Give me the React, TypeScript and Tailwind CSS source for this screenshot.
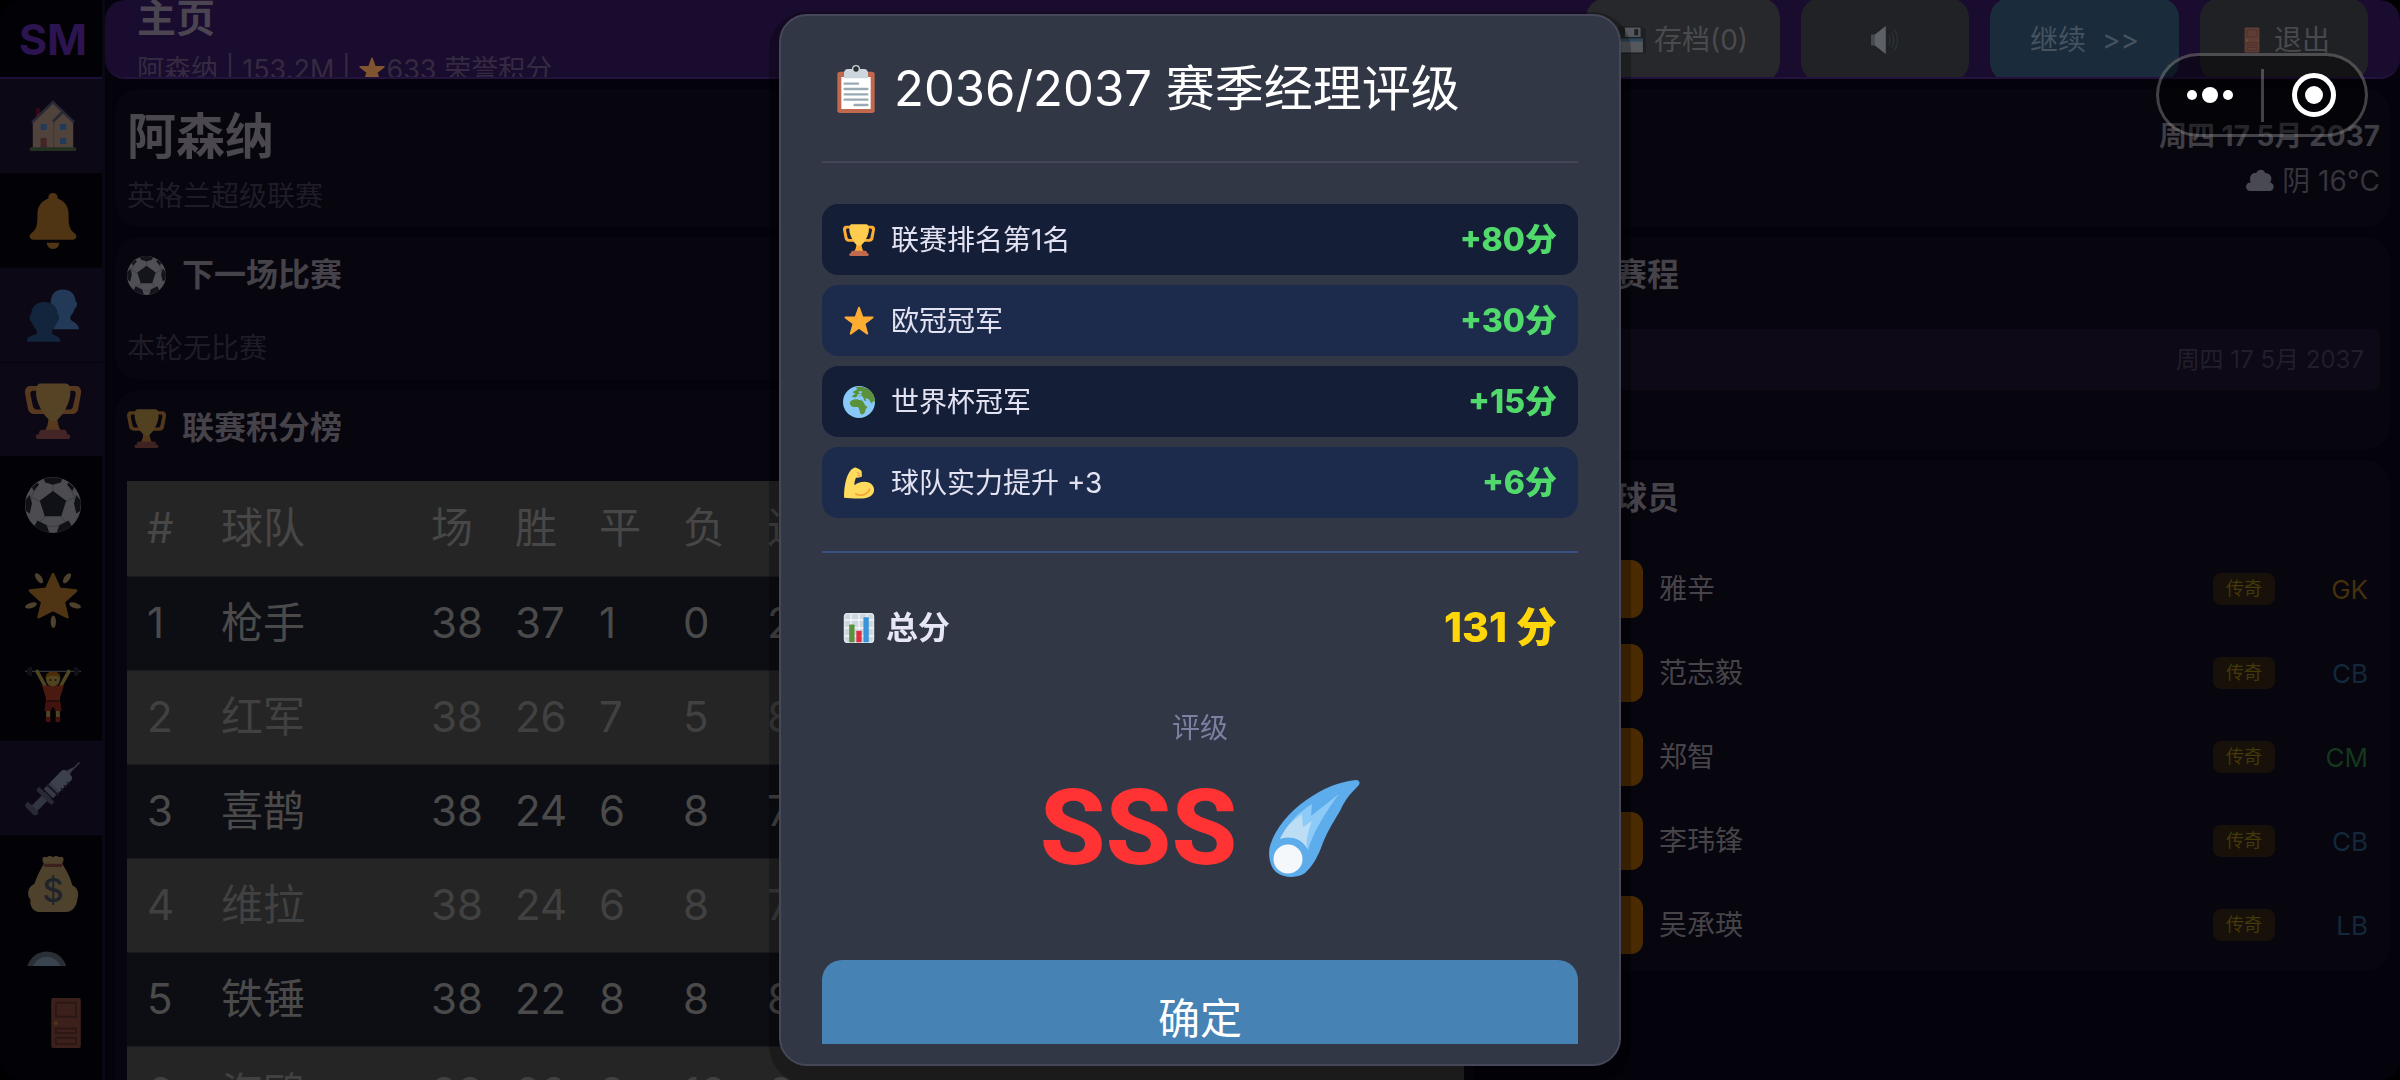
import type { ReactNode } from "react";

type IconProps = { className: string };

function Glyph({ className, children, box = "0 0 36 36" }: { className: string; children: ReactNode; box?: string }) {
  return (
    <svg viewBox={box} className={`shrink-0 ${className}`} aria-hidden="true">
      {children}
    </svg>
  );
}

const Trophy = ({ className }: IconProps) => (
  <Glyph className={className}>
    <path fill="#FFAC33" d="M5.123 5h6C12.227 5 13 4.896 13 6V4c0-1.104-.773-2-1.877-2h-8c-2 0-3.583 2.125-3 5 0 0 1.791 9.375 1.917 9.958C2.373 18.5 4.164 20 6.081 20h6.958c1.105 0-.039-1.896-.039-3v-2c0 1.104-.773 2-1.877 2h-4c-1.104 0-1.833-1.042-2-2S3.539 7.667 3.539 7.667C3.206 5.75 4.018 5 5.123 5zm25.812 0h-6C23.831 5 22 4.896 22 6V4c0-1.104 1.831-2 2.935-2h8c2 0 3.584 2.125 3 5 0 0-1.633 9.419-1.771 10-.354 1.5-2.042 3-4 3h-7.146C21.914 20 22 18.104 22 17v-2c0 1.104 1.831 2 2.935 2h4c1.104 0 1.834-1.042 2-2s1.584-7.333 1.584-7.333C32.851 5.75 32.04 5 30.935 5z" />
    <path fill="#FFAC33" d="M20.8 22c0-6.9-2.7 0-2.7 0s-3-6.9-3 0-3.3 10-3.3 10h12.3s-3.3-3-3.3-10z" />
    <path fill="#FFCC4D" d="M29.123 6.577c0 6.775-6.77 18.192-11 18.192-4.231 0-11-11.417-11-18.192 0-5.195 1-6.319 3-6.319h15c2.917 0 4 .684 4 6.319z" />
    <path fill="#C1694F" d="M27 33c0 1.1.2 2-.9 2h-16C9 35 9 34.100 9 33v-1c0-1.100 1.200-2 2.200-2h13.900c1 0 1.900.900 1.900 2v1z" />
    <rect x="7" y="33" width="22" height="3" rx="1.3" fill="#C1694F" />
  </Glyph>
);

const Star = ({ className }: IconProps) => (
  <Glyph className={className}>
    <polygon
      points="18,3 21.8,13.6 33.3,14 24.2,20.9 27.400,32.300 18,25.500 8.600,32.300 11.800,20.900 2.700,14 14.200,13.600"
      fill="#FFAC33"
      stroke="#FFAC33"
      strokeWidth="2"
      strokeLinejoin="round"
    />
  </Glyph>
);

const House = ({ className }: IconProps) => (
  <Glyph className={className}>
    <path fill="#A0041E" d="M7 6h2.600v6H7z" />
    <path fill="#E8CC95" d="M5 14L18 2l13 12v18H5z" />
    <path fill="#C9AC76" d="M18 14h1v18h-1z" />
    <path d="M4.500 15L18 2l13.500 13M18 14.500l6-6" fill="none" stroke="#66757F" strokeWidth="1.700" />
    <path fill="#55ACEE" d="M10 16h4v4h-4zM22.500 16h4v4h-4zM22.500 25h4v4h-4z" />
    <path fill="#C1694F" d="M10 25h4v7h-4z" />
    <rect x="3" y="31" width="30" height="2.500" rx="1.200" fill="#5C913B" />
  </Glyph>
);

const Bell = ({ className }: IconProps) => (
  <Glyph className={className}>
    <path fill="#FFAC33" d="M28 13c0 9 .5 10 4.500 13.500 1 1 .5 3.500-1.500 3.500H5c-2 0-2.500-2.500-1.500-3.500C7.500 23 8 22 8 13 8 7.500 12.500 3 18 3s10 4.500 10 10z" />
    <circle cx="18" cy="3" r="3" fill="#FFAC33" />
    <path fill="#FFAC33" d="M14 32h8c0 2.200-1.800 4-4 4s-4-1.800-4-4z" />
  </Glyph>
);

const People = ({ className }: IconProps) => (
  <Glyph className={className}>
    <path fill="#55ACEE" d="M24.500 1c5 0 8 3.500 8 7.500 1.500.5 1.200 4-.5 4.500-.4 2-1.500 3.800-2.800 5v2c0 1.500 5.500 2.500 5.500 6.500H17l3-8c-2-1-3.500-5-3.500-8.500C16.500 4.500 19 1 24.500 1z" />
    <path fill="#226699" d="M12.500 9c5.500 0 8.500 3.500 8.500 8 1.500.5 1.200 4.500-.5 5-.5 2-1.600 3.800-3 5v2.500c2 1 5.300 1.800 5.300 5.000H1.200C1.200 30.500 5 30.500 7.500 29.500V27c-1.400-1.200-2.500-3-3-5-1.700-.5-2-4.500-.5-5 0-4.500 3-8 8.500-8z" />
  </Glyph>
);

const Ball = ({ className }: IconProps) => (
  <Glyph className={className}>
    <circle cx="18" cy="18" r="18" fill="#F5F8FA" />
    <g fill="none" stroke="#CCD6DD" strokeWidth="1">
      <path d="M18 4v6M10 16l-6-3M26 16l6-3M13 25l-4 5M23 25l4 5M9 30l9 2 9-2M4 13l3-6M32 13l-3-6M4 13l-1 10M32 13l1 10" />
    </g>
    <path fill="#31373D" d="M18 9l8.500 6.200-3.200 10H12.700l-3.200-10zM12 1.200Q18-1 24 1.200L23 3.500 18 5l-5-1.500zM.3 15L3 11.500 4.500 17 3 23.500.8 22A18 18 0 01.3 15zM35.700 15L33 11.500 31.500 17 33 23.500l2.200-1.500a18 18 0 00.5-7zM6 31.500L8 28l6 3 1.500 4.500A18 18 0 016 31.500zM30 31.500L28 28l-6 3-1.500 4.500A18 18 0 0030 31.500zM4.500 6.500L8 3.500 9 5 5.500 9zM31.500 6.500L28 3.500 27 5l3.500 4z" />
  </Glyph>
);

const GlowStar = ({ className }: IconProps) => (
  <Glyph className={className}>
    <polygon
      points="18,1.500 22.200,10.800 32.800,12 24.800,19.200 27.200,29 18,24.300 8.800,29 11.200,19.200 3.200,12 13.800,10.800"
      fill="#FFAC33"
      stroke="#FFAC33"
      strokeWidth="1.800"
      strokeLinejoin="round"
    />
    <g fill="#FFD983">
      <ellipse cx="9" cy="4" rx="1.800" ry="3.700" transform="rotate(-36 9 4)" />
      <ellipse cx="27" cy="4" rx="1.800" ry="3.700" transform="rotate(36 27 4)" />
      <ellipse cx="3.800" cy="21.500" rx="1.700" ry="3.900" transform="rotate(72 3.800 21.500)" />
      <ellipse cx="32.200" cy="21.500" rx="1.700" ry="3.900" transform="rotate(-72 32.200 21.500)" />
      <ellipse cx="18.200" cy="32" rx="1.700" ry="4" />
    </g>
  </Glyph>
);

const Lifter = ({ className }: IconProps) => (
  <Glyph className={className}>
    <path stroke="#99AAB5" strokeWidth=".8" d="M0 3.500h36" />
    <path fill="#31373D" d="M2.500.5h2v6h-2zM31.500.5h2v6h-2zM1.200 1.500h1.300v4H1.200zM33.500 1.500h1.300v4h-1.300z" />
    <path d="M7.800 3.500l5 9M28.200 3.500l-5 9" stroke="#FFDC5D" strokeWidth="2.300" strokeLinecap="round" />
    <path fill="#F0562A" d="M11 12.500h14l-2.500 8v6h-9v-6z" />
    <path fill="#DD3A22" d="M13.300 23h9.400l.8 6h-4l-1.500-4-1.500 4h-4z" />
    <path fill="#FFDC5D" d="M13.600 29h2.600v4h-2.600zM19.800 29h2.600v4h-2.600z" />
    <path fill="#DD3A22" d="M13.400 33h3v3h-3zM19.600 33h3v3h-3z" />
    <circle cx="18" cy="8.500" r="4.500" fill="#FFDC5D" />
    <path fill="#F4900C" d="M13.200 8.500C13 4.500 15.500 3.500 18 3.500s5 1 4.800 5c-.8-2-2.800-2.200-4.800-2.200s-4 .2-4.800 2.200z" />
    <circle cx="16.300" cy="9" r=".6" fill="#662113" />
    <circle cx="19.700" cy="9" r=".6" fill="#662113" />
    <path fill="#662113" d="M14 22h8v1h-8z" />
  </Glyph>
);

const Syringe = ({ className }: IconProps) => (
  <Glyph className={className}>
    <path d="M28 8l7-7" stroke="#99AAB5" strokeWidth="1" />
    <path fill="#99AAB5" d="M25 7l6-3-2.500 6-2 1.500z" />
    <path fill="#8899A6" d="M4 29l9-9 3.500 3.500-9 9z" />
    <path fill="#66757F" d="M.5 27.500c1-1.500 2-1 3 0l4 4c1 1 1.500 2 .3 3-1 .8-2 .3-3-.5l-4-4C0 29 0 28.500.5 27.500z" />
    <path fill="#99AAB5" d="M12 18L23.500 6.500c1-1 2-1 3 0l3 3c1 1 1 2 0 3L18 24z" />
    <path fill="#A8C4D0" d="M16.500 13.500l7-7c1-1 2-1 3 0l3 3c1 1 1 2 0 3l-7 7z" />
    <path d="M14 15l7.500 7" stroke="#31373D" strokeWidth="1.400" />
    <path d="M23 17.500l1.500 1.500M25 15.500l1.500 1.500M27 13.500l1.500 1.500" stroke="#31373D" strokeWidth="1" />
    <path d="M9 18.500l8 8" stroke="#66757F" strokeWidth="3" strokeLinecap="round" />
  </Glyph>
);

const MoneyBag = ({ className }: IconProps) => (
  <Glyph className={className}>
    <path fill="#FDD888" d="M12 5l12 0c2 3.500 5 8 6.500 14 3 1 4.500 5 3.300 8-.3 4-2.300 9-7.800 9H10c-5 0-7-4-6.500-8C1 25.500 1.500 20 6 18 7.500 13 10 9 12 5z" />
    <path fill="#FDD888" d="M12.500 5.500C10 2 11.500-.5 14 .8c1.500-1 2.500-1 4 0 1.500-1 2.500-1 4 0 2.500-1.300 4 1.200 1.500 4.700z" />
    <rect x="12" y="5" width="12" height="2" rx="1" fill="#BF6952" />
    <text x="18" y="29.500" textAnchor="middle" fontSize="21" fontWeight="500" fill="#67757F" fontFamily="Inter, sans-serif">
      $
    </text>
  </Glyph>
);

const Magnifier = ({ className }: IconProps) => (
  <Glyph className={className}>
    <path d="M21 21l11 11" stroke="#66757F" strokeWidth="5" strokeLinecap="round" />
    <circle cx="14" cy="14" r="13" fill="#8899A6" />
    <circle cx="14" cy="14" r="9.500" fill="#BBDDF5" />
  </Glyph>
);

const Door = ({ className }: IconProps) => (
  <Glyph className={className}>
    <rect x="8.500" y="2" width="19" height="32" rx="1.200" fill="#C1694F" />
    <g fill="none" stroke="#8A4A36" strokeWidth="1.200">
      <path d="M11.500 5h13v9h-13zM11.500 21.500h13v3h-13zM11.500 27.500h13v4h-13z" />
    </g>
    <circle cx="11.500" cy="18.200" r="1.300" fill="#FFAC33" />
  </Glyph>
);

const Disk = ({ className }: IconProps) => (
  <Glyph className={className}>
    <path fill="#101316" d="M3 0h27l6 5v28a3 3 0 01-3 3H3a3 3 0 01-3-3V3a3 3 0 013-3z" />
    <path fill="#A9B3BA" d="M9 2h20v12H9z" />
    <path fill="#101316" d="M21 4h5v8h-5z" />
    <path fill="#A9B3BA" d="M4 18h28v16H4z" />
    <path fill="#3F7FAE" d="M4 16h28v4H4z" />
  </Glyph>
);

const Speaker = ({ className }: IconProps) => (
  <Glyph className={className}>
    <path fill="#8899A6" d="M0 11h9v14H0z" />
    <path fill="#CCD6DD" d="M5 11L19 0v36L5 25z" />
    <path d="M23 12q3 6 0 12M26.500 8q5.500 10 0 20M30 4q8 14 0 28" fill="none" stroke="#3B5A70" strokeWidth="1.300" />
  </Glyph>
);

const Cloud = ({ className }: IconProps) => (
  <Glyph className={className}>
    <path fill="#E1E8ED" d="M5 31c-7-1-6.500-11 1-11C3 11 9 7 13 8c2-6 10-6 12 0 6-.5 10 6 6 12 6 1 6 10 0 11z" />
  </Glyph>
);

const Clipboard = ({ className }: IconProps) => (
  <Glyph className={className}>
    <rect x="4" y="5" width="28" height="31" rx="2" fill="#C1694F" />
    <path fill="#fff" d="M7 9h22v24H7z" />
    <path fill="#CCD6DD" d="M9 10V6c0-1.500 1-3 3-3h3a3 3 0 016 0h3c2 0 3 1.500 3 3v4z" />
    <circle cx="18" cy="3" r="2" fill="#292F33" />
    <path d="M9.500 14h10M9.500 18h17M9.500 22h17M9.500 26h17M17 30h9.500" stroke="#99AAB5" strokeWidth="1.800" strokeLinecap="round" />
  </Glyph>
);

const Globe = ({ className }: IconProps) => (
  <Glyph className={className}>
    <circle cx="18" cy="18" r="18" fill="#88C9F9" />
    <path fill="#5C913B" d="M8 18c1.500-3 5-3.500 8.500-3 2 1.500 5 .5 6 2.500l3 5 2 .5c-.5 2-2.500 3-2.500 5 0 2-2.500 4.500-4.500 4-2-2-1.500-5-3-7.500-1-1.500-5 0-7.500-1.500-1.500-1.500-3-3-2-5z" />
    <path fill="#5C913B" d="M10.500 11c1-1 2.500-1 3.500-2.500L11 7.500C12 5 15 5.500 16 3.500l-2-2c7-2 13 .5 17 4 3.500 4 5 7.500 4.900 12.500l-2-1-1.500 3-3.500-5-4-1.500 1.500 3-2 .5-2-4.500-2-2-1.500 1.500-2-1-3 2-3.500-.5z" />
    <path fill="#88C9F9" d="M17 6.500l3.500-1 1.500 1.500-3 1.500zM15.500 10l4-1.500 2 1.200-4 2z" />
  </Glyph>
);

const Biceps = ({ className }: IconProps) => (
  <Glyph className={className}>
    <path fill="#FFDC5D" d="M1.200 34.500C1 24 3 11 8 4.500 10 2 12.500.5 14 .6c3 1 6.500 2.600 7 4.500.5 1.500-.3 2 .2 3.200.4 1.200.3 2.500-1.200 3-2 .8-4.500 1-5.500.7-1 3-2 5.500-1.500 8.500C16.500 17 24 15.500 29 17.500c5 2 7 7 5.500 11-1.500 5-8 7-15 7-8 .1-14.500-1-18.300-1z" />
    <path d="M14.500 30.500c6 2.800 13 .5 15.500-5.500" fill="none" stroke="#F9A536" strokeWidth="1.900" strokeLinecap="round" />
    <path d="M16 6.500l2.500.8M16.500 9.500l3 .3" stroke="#EF9645" strokeWidth="1.200" strokeLinecap="round" />
  </Glyph>
);

const Chart = ({ className }: IconProps) => (
  <Glyph className={className}>
    <rect x="1" y="1" width="34" height="34" rx="4" fill="#CCD6DD" />
    <path d="M9 1v34M18 1v34M27 1v34M1 9h34M1 18h34M1 27h34" stroke="#F5F8FA" strokeWidth="1.500" />
    <rect x="1.800" y="1.800" width="32.400" height="32.400" rx="3.500" fill="none" stroke="#E1E8ED" strokeWidth="1.600" />
    <path fill="#5C913B" d="M7 15q0-1 1-1h4q1 0 1 1v19H7z" />
    <path fill="#DD2E44" d="M15 22q0-1 1-1h4q1 0 1 1v12h-6z" />
    <path fill="#3B94D9" d="M23 7q0-1 1-1h4q1 0 1 1v27h-6z" />
  </Glyph>
);

const Comet = ({ className }: IconProps) => (
  <Glyph className={className} box="0 0 91 97">
    <path fill="#5DADEC" d="M87 0C91 0 91.500 4 89 6 80 15 76 20 71 31 62 46 57 54 52 68c-4 10-9 19-16 25C30 98 14 99 6 91-1 83-1 70 2 63 9 43 28 24 50 12 64 4 77 1 87 0z" />
    <path fill="#8CCAF7" d="M11 59C17 46 28 33 43 24L42 36 70 14C58 30 44 52 39 70 34 60 24 55 11 59z" />
    <path fill="#BDDDF4" d="M11 59C16 48 23 41 33 34l1 13 9-6C39 51 37 60 38 68 33 60 24 55 11 59z" />
    <circle cx="19" cy="79" r="14.500" fill="#F5F8FA" />
  </Glyph>
);

const navItems = [
  { label: "主页", Icon: House, lit: true },
  { label: "通知", Icon: Bell, lit: false },
  { label: "阵容", Icon: People, lit: true },
  { label: "联赛", Icon: Trophy, lit: true },
  { label: "比赛", Icon: Ball, lit: false },
  { label: "球星", Icon: GlowStar, lit: false },
  { label: "训练", Icon: Lifter, lit: false },
  { label: "医疗", Icon: Syringe, lit: true },
  { label: "财务", Icon: MoneyBag, lit: false },
  { label: "球探", Icon: Magnifier, lit: false },
];

const standings = [
  ["1", "枪手", "38", "37", "1", "0", "2"],
  ["2", "红军", "38", "26", "7", "5", "8"],
  ["3", "喜鹊", "38", "24", "6", "8", "7"],
  ["4", "维拉", "38", "24", "6", "8", "7"],
  ["5", "铁锤", "38", "22", "8", "8", "8"],
  ["6", "海鸥", "38", "20", "8", "10", "6"],
];

const players = [
  { name: "雅辛", pos: "GK", tone: "text-[#45300c]" },
  { name: "范志毅", pos: "CB", tone: "text-[#12293d]" },
  { name: "郑智", pos: "CM", tone: "text-[#14381c]" },
  { name: "李玮锋", pos: "CB", tone: "text-[#12293d]" },
  { name: "吴承瑛", pos: "LB", tone: "text-[#12293d]" },
];

const scores = [
  { text: "联赛排名第1名", points: "+80分", Icon: Trophy },
  { text: "欧冠冠军", points: "+30分", Icon: Star },
  { text: "世界杯冠军", points: "+15分", Icon: Globe },
  { text: "球队实力提升 +3", points: "+6分", Icon: Biceps },
];

function Sidebar() {
  return (
    <aside className="flex w-[105px] shrink-0 flex-col overflow-hidden rounded-l-[20px] border-r-[3px] border-[#0b0815] bg-[#020106]">
      <div className="flex h-[79px] shrink-0 items-center justify-center border-b-2 border-[#1d0f35] pt-0.5 pl-1 text-[43px] font-bold text-[#2b1450]">
        SM
      </div>
      <nav className="min-h-0 flex-1 overflow-hidden">
        <div className="flex h-[946px] flex-col">
          {navItems.map(({ label, Icon, lit }) => (
            <button
              key={label}
              aria-label={label}
              className={`flex flex-1 items-center justify-center border-b border-[#05030a] pt-0.5 pl-1 ${lit ? "bg-[#0d0815]" : ""}`}
            >
              <Icon className="size-14 opacity-30" />
            </button>
          ))}
        </div>
      </nav>
      <button aria-label="离开" className="flex h-[114px] shrink-0 items-center justify-end pr-2">
        <Door className="size-14 opacity-30" />
      </button>
    </aside>
  );
}

function Header() {
  const base = "flex h-[84px] items-center justify-center gap-2 rounded-[20px] text-[28px]";
  return (
    <header className="flex h-[79px] shrink-0 items-center overflow-hidden rounded-[20px] border-b-2 border-[#22123c] bg-[#1a0c2e] pt-0.5 pr-8 pl-8">
      <div className="flex-1">
        <h1 className="text-[39px] leading-[60px] font-bold text-[#4b4552]">主页</h1>
        <p className="flex items-center text-[27px] leading-[44px] text-[#352a41]">
          <span>阿森纳 | 153.2M |&nbsp;</span>
          <Star className="size-7 opacity-45" />
          <span>633 荣誉积分</span>
        </p>
      </div>
      <div className="flex gap-[21px]">
        <button className={`${base} w-[194px] bg-[#26282b] text-[#4a4b4e]`}>
          <Disk className="size-7 opacity-35" />
          存档(0)
        </button>
        <button aria-label="声音" className={`${base} w-[168px] bg-[#212226]`}>
          <Speaker className="size-7 opacity-35" />
        </button>
        <button className={`${base} w-[189px] gap-4 bg-[#1a2b3c] text-[#45525f]`}>
          <span>继续</span>
          <span>&gt;&gt;</span>
        </button>
        <button className={`${base} w-[168px] bg-[#202125] text-[#48494c]`}>
          <Door className="size-7 opacity-40" />
          退出
        </button>
      </div>
    </header>
  );
}

function CardTitle({ Icon, children }: { Icon: (p: IconProps) => ReactNode; children: ReactNode }) {
  return (
    <h2 className="flex h-[52px] items-center gap-4 text-[32px] font-bold text-[#454349]">
      <Icon className="size-[39px] opacity-30" />
      {children}
    </h2>
  );
}

function Standings() {
  return (
    <table className="mt-[27px] w-full table-fixed text-left text-[42px] leading-[50px]">
      <thead className="bg-[#252525] text-[#474747]">
        <tr className="h-[95px]">
          <th className="w-[74px] pl-5 font-normal">#</th>
          <th className="w-[210px] pl-5 font-normal">球队</th>
          {["场", "胜", "平", "负", "进", "失", "净", "分"].map((h) => (
            <th key={h} className="w-[84px] pl-5 font-normal">
              {h}
            </th>
          ))}
          <th className="p-0" />
        </tr>
      </thead>
      <tbody>
        {standings.map((row, i) => (
          <tr
            key={row[0]}
            className={`h-[94px] border-t border-[#191a1f] ${i % 2 ? "bg-[#252525] text-[#414141]" : "bg-[#0d0e13] text-[#4a4a4a]"}`}
          >
            {row.map((cell, j) => (
              <td key={j} className="pl-5">
                {cell}
              </td>
            ))}
            <td colSpan={4} />
          </tr>
        ))}
      </tbody>
    </table>
  );
}

const card = "rounded-3xl bg-[#07050e] pl-3 pr-[10px]";

function Dashboard() {
  return (
    <main className="flex min-h-0 flex-1 flex-col gap-[10px] overflow-hidden p-[10px]">
      <section className={`${card} flex justify-between pt-4 pb-1`}>
        <div>
          <h2 className="text-[49px] leading-[64px] font-bold text-[#4a484e]">阿森纳</h2>
          <p className="text-[28px] leading-[54px] text-[#1f1c27]">英格兰超级联赛</p>
        </div>
        <div className="text-right text-[28px] text-[#403e45]">
          <p className="leading-[62px] font-bold">周四 17 5月 2037</p>
          <p className="flex items-center justify-end gap-2 leading-[28px] text-[#36343c]">
            <Cloud className="size-7 opacity-30" />
            阴 16°C
          </p>
        </div>
      </section>
      <div className="grid flex-1 grid-cols-[3fr_2fr] gap-[10px]">
        <div className="flex flex-col gap-[10px]">
          <section className={`${card} pt-3 pb-2`}>
            <CardTitle Icon={Ball}>下一场比赛</CardTitle>
            <p className="mt-6 text-[28px] leading-[47px] text-[#1f1c27]">本轮无比赛</p>
          </section>
          <section className={`${card} flex-1 pt-3`}>
            <CardTitle Icon={Trophy}>联赛积分榜</CardTitle>
            <Standings />
          </section>
        </div>
        <div className="flex flex-col gap-[10px]">
          <section className={`${card} pt-3 pb-[60px]`}>
            <CardTitle Icon={Clipboard}>近期赛程</CardTitle>
            <p className="mt-7 rounded-lg bg-[#0d0916] px-4 text-right text-[24px] leading-[61px] text-[#221e2b]">周四 17 5月 2037</p>
          </section>
          <section className={`${card} pt-3 pb-1`}>
            <CardTitle Icon={Star}>关键球员</CardTitle>
            <ul className="mt-[23px]">
              {players.map((p) => (
                <li key={p.name} className="flex h-[84px] items-center pr-3 text-[28px]">
                  <span className="h-[58px] w-[147px] rounded-xl bg-[#4a2a00]" />
                  <span className="ml-4 flex-1 text-[#464449]">{p.name}</span>
                  <span className="rounded-lg bg-[#17110a] px-[13px] text-[18px] leading-[32px] text-[#463909]">传奇</span>
                  <span className={`w-[93px] text-right text-[26px] ${p.tone}`}>{p.pos}</span>
                </li>
              ))}
            </ul>
          </section>
        </div>
      </div>
    </main>
  );
}

function RatingDialog() {
  return (
    <div className="fixed inset-0 flex justify-center py-[14px]">
      <div
        role="dialog"
        aria-modal="true"
        aria-labelledby="rating-title"
        className="flex w-full max-w-[842px] flex-col rounded-[28px] border-2 border-[#464758] bg-[#323745] px-[41px] pb-5 shadow-[0_8px_0_10px_rgba(0,0,0,0.25)]"
      >
        <h2
          id="rating-title"
          className="flex shrink-0 items-center gap-3.5 border-b-2 border-[#45455a] px-[10px] py-10 text-[49px] leading-[65px] text-white"
        >
          <Clipboard className="size-12" />
          2036/2037 赛季经理评级
        </h2>
        <div className="min-h-0 flex-1 overflow-hidden">
          <ul className="mt-[41px] flex flex-col gap-[10px]">
            {scores.map(({ text, points, Icon }, i) => (
              <li
                key={text}
                className={`flex h-[71px] items-center rounded-2xl px-[21px] ${i % 2 ? "bg-[#1c2b4b]" : "bg-[#141e37]"}`}
              >
                <Icon className="size-8" />
                <span className="ml-4 flex-1 text-[28px] text-[#e2e2f2]">{text}</span>
                <span className="text-[32px] font-extrabold text-[#51d96b]">{points}</span>
              </li>
            ))}
          </ul>
          <hr className="mt-[33px] h-[2px] rounded-full border-0 bg-[#3a5085]" />
          <div className="mt-[51px] flex h-12 items-center px-[21px] font-bold">
            <Chart className="size-8" />
            <span className="ml-[11px] flex-1 text-[32px] text-[#e6e6f6]">总分</span>
            <span className="text-[41px] font-extrabold text-[#ffd60a]">131 分</span>
          </div>
          <p className="mt-14 text-center text-[28px] leading-10 text-[#7c80a2]">评级</p>
          <div className="mt-5 flex h-[120px] items-center justify-center gap-8">
            <strong className="font-['Roboto',sans-serif] text-[106px] leading-[120px] font-extrabold text-[#ff3333]">SSS</strong>
            <Comet className="h-[97px] w-[91px]" />
          </div>
          <button className="mt-[72px] h-[116px] w-full rounded-[20px] bg-[#4682b4] text-[42px] text-white">确定</button>
        </div>
      </div>
    </div>
  );
}

function Capsule() {
  return (
    <div className="fixed top-[53px] right-8 flex h-[84px] w-[212px] items-center rounded-full border-[3px] border-white/25 bg-black/40">
      <button aria-label="更多" className="flex h-full flex-1 items-center justify-center gap-[5px]">
        <span className="size-[10px] rounded-full bg-white" />
        <span className="size-4 rounded-full bg-white" />
        <span className="size-[10px] rounded-full bg-white" />
      </button>
      <span className="h-[53px] w-[3px] bg-white/25" />
      <button aria-label="关闭" className="flex h-full flex-1 items-center justify-center">
        <span className="flex size-11 items-center justify-center rounded-full border-[5px] border-white">
          <span className="size-[18px] rounded-full bg-white" />
        </span>
      </button>
    </div>
  );
}

export default function App() {
  return (
    <div className="flex h-screen overflow-hidden bg-black font-['Inter','Noto_Sans_CJK_SC',sans-serif]">
      <Sidebar />
      <div className="flex min-w-0 flex-1 flex-col overflow-hidden rounded-r-[20px] bg-[#04020b]">
        <Header />
        <Dashboard />
      </div>
      <RatingDialog />
      <Capsule />
    </div>
  );
}
